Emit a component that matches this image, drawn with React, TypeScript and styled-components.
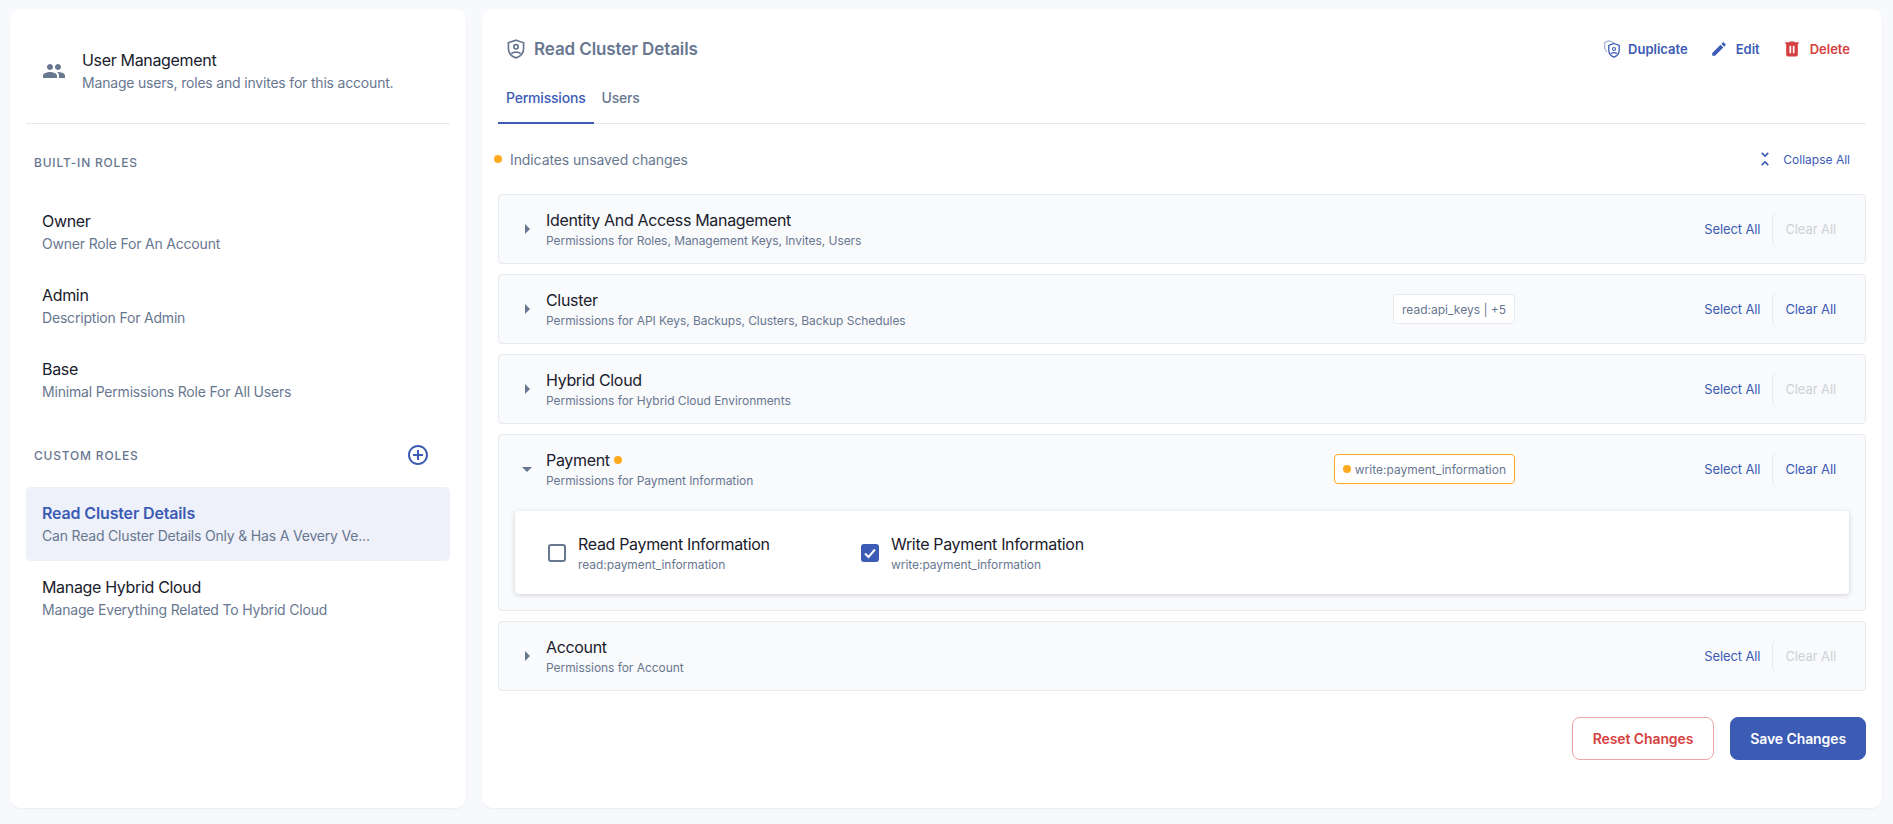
import React from 'react';
import styled, { createGlobalStyle } from 'styled-components';
import { MdAddCircleOutline, MdArrowDropDown, MdArrowRight, MdEdit, MdPeople, MdUnfoldLess } from 'react-icons/md';

const PRIMARY = '#3b5bb5';
const DARK = '#1a202c';
const MUTED = '#687790';
const LINE = '#e6e9ef';
const ORANGE = '#ffa91f';
const RED = '#d53f3f';

const GlobalStyles = createGlobalStyle`
  html, body {
    margin: 0;
    padding: 0;
    background: #f8f9fc;
    font-family: Inter, "Liberation Sans", sans-serif;
    color: ${DARK};
  }
  * { box-sizing: border-box; }
`;

const Page = styled.div`
  display: grid;
  grid-template-columns: 456px 1400px;
  gap: 16px;
  height: 824px;
  padding: 9px 11px 16px 10px;
`;

const Card = styled.div`
  background: #fff;
  border-radius: 10px;
  box-shadow: 0 1px 2px rgba(30, 41, 59, 0.06);
  padding: 0 16px;
`;

const SideHeader = styled.div`
  display: flex;
  align-items: center;
  gap: 16px;
  height: 115px;
  padding: 9px 0 0 16px;
  border-bottom: 1px solid ${LINE};
  color: ${MUTED};
`;

const TextStack = styled.div`
  display: flex;
  flex-direction: column;
  min-width: 0;
`;

const Title = styled.div`
  font-size: 16px;
  line-height: 24px;
  letter-spacing: -0.33px;
  color: ${DARK};
`;

const SideSub = styled.div`
  font-size: 14px;
  line-height: 22px;
  letter-spacing: -0.19px;
  color: ${MUTED};
  white-space: nowrap;
  overflow: hidden;
  text-overflow: ellipsis;
`;

const SectionRow = styled.div<{ $top: number; $bottom: number }>`
  display: flex;
  align-items: center;
  justify-content: space-between;
  height: 24px;
  margin: ${p => p.$top}px 0 ${p => p.$bottom}px;
  padding: 0 20px 0 8px;
`;

const SectionLabel = styled.div`
  font-size: 12px;
  font-weight: 500;
  letter-spacing: 0.8px;
  color: ${MUTED};
`;

const AddIcon = styled(MdAddCircleOutline)`
  display: block;
  color: ${PRIMARY};
`;

const RoleItem = styled.div<{ $active?: boolean }>`
  height: 74px;
  padding: 14px 16px;
  border-radius: 5px;
  background: ${p => (p.$active ? '#eef1f9' : 'transparent')};
`;

const RoleName = styled(Title)<{ $active?: boolean }>`
  color: ${p => (p.$active ? PRIMARY : DARK)};
  font-weight: ${p => (p.$active ? 600 : 400)};
  letter-spacing: ${p => (p.$active ? '-0.15px' : '-0.33px')};
`;

const TitleRow = styled.div`
  display: flex;
  align-items: center;
  justify-content: space-between;
  height: 67px;
  padding: 13px 16px 0 9px;
`;

const RoleHeading = styled.div`
  display: flex;
  align-items: center;
  gap: 9px;
  font-size: 17px;
  font-weight: 600;
  letter-spacing: -0.1px;
  color: ${MUTED};
`;

const HeaderActions = styled.div`
  display: flex;
  align-items: center;
  gap: 22px;
`;

const HeaderAction = styled.div<{ $danger?: boolean }>`
  display: flex;
  align-items: center;
  gap: 8px;
  font-size: 13px;
  font-weight: 600;
  color: ${p => (p.$danger ? RED : PRIMARY)};
`;

const Tabs = styled.div`
  display: flex;
  height: 48px;
  border-bottom: 1px solid ${LINE};
`;

const Tab = styled.div<{ $active?: boolean }>`
  height: 48px;
  padding: 0 8px;
  line-height: 44px;
  font-size: 14px;
  font-weight: 500;
  letter-spacing: -0.2px;
  color: ${p => (p.$active ? PRIMARY : MUTED)};
  border-bottom: ${p => (p.$active ? `2px solid ${PRIMARY}` : 'none')};
`;

const Toolbar = styled.div`
  display: flex;
  align-items: center;
  justify-content: space-between;
  height: 70px;
  padding-right: 16px;
`;

const Legend = styled.div`
  display: flex;
  align-items: center;
  gap: 8px;
  margin-left: -4px;
  font-size: 14px;
  letter-spacing: -0.1px;
  color: ${MUTED};
`;

const Dot = styled.span`
  display: inline-block;
  flex: none;
  width: 8px;
  height: 8px;
  border-radius: 50%;
  background: ${ORANGE};
`;

const CollapseAll = styled.div`
  display: flex;
  align-items: center;
  gap: 8px;
  font-size: 12px;
  color: ${PRIMARY};
`;

const PanelList = styled.div`
  display: flex;
  flex-direction: column;
  gap: 10px;
`;

const Panel = styled.div`
  background: #f9fafc;
  border: 1px solid ${LINE};
  border-radius: 4px;
`;

const PanelHeader = styled.div`
  display: flex;
  align-items: center;
  height: 68px;
  padding-left: 16px;
`;

const Caret = styled.span`
  display: flex;
  color: ${MUTED};
  margin-right: 7px;
`;

const PanelText = styled.div`
  flex: 1;
  min-width: 0;
`;

const PanelTitle = styled(Title)`
  display: flex;
  align-items: center;
  gap: 4px;
`;

const PanelSub = styled.div`
  font-size: 12px;
  line-height: 18px;
  letter-spacing: -0.05px;
  color: ${MUTED};
`;

const Tag = styled.div<{ $changed?: boolean }>`
  display: flex;
  align-items: center;
  gap: 4px;
  height: 30px;
  padding: 0 8px;
  font-size: 12px;
  color: ${MUTED};
  background: #fff;
  border: 1px solid ${p => (p.$changed ? ORANGE : LINE)};
  border-radius: 4px;
`;

const PanelActions = styled.div`
  display: flex;
  align-items: center;
  justify-content: flex-end;
  width: 350px;
  padding-right: 29px;
  flex: none;
  font-size: 13px;
  letter-spacing: -0.1px;
`;

const SelectAll = styled.div`
  color: ${PRIMARY};
  margin-right: 12px;
`;

const ClearAll = styled.div<{ $disabled: boolean }>`
  display: flex;
  align-items: center;
  height: 37px;
  padding-left: 12px;
  border-left: 1px solid ${LINE};
  border-radius: 8px;
  color: ${p => (p.$disabled ? '#cdd1d8' : PRIMARY)};
`;

const PermissionCard = styled.div`
  display: flex;
  align-items: center;
  height: 83px;
  margin: 8px 16px 16px;
  padding-left: 33px;
  background: #fff;
  border-radius: 4px;
  box-shadow: 0 1px 5px rgba(30, 41, 59, 0.2);
`;

const Permission = styled.div`
  display: flex;
  align-items: center;
  gap: 12px;
  width: 313px;
`;

const CheckBox = styled.div<{ $checked: boolean }>`
  display: flex;
  align-items: center;
  justify-content: center;
  flex: none;
  width: 18px;
  height: 18px;
  border-radius: 3px;
  background: ${p => (p.$checked ? PRIMARY : '#fff')};
  border: ${p => (p.$checked ? 'none' : `2px solid ${MUTED}`)};
`;

const Footer = styled.div`
  display: flex;
  justify-content: flex-end;
  gap: 16px;
  margin-top: 26px;
`;

const FooterButton = styled.button<{ $primary?: boolean }>`
  height: 43px;
  padding: 0 ${p => (p.$primary ? 19 : 20)}px;
  border-radius: 8px;
  font-family: inherit;
  font-size: 14px;
  font-weight: 600;
  letter-spacing: -0.1px;
  color: ${p => (p.$primary ? '#fff' : RED)};
  background: ${p => (p.$primary ? PRIMARY : '#fff')};
  border: 1px solid ${p => (p.$primary ? PRIMARY : '#eba3a6')};
`;

function ShieldIcon() {
  return (
    <svg width="18" height="20" viewBox="0 0 18 20" fill="none" stroke={MUTED} strokeWidth="1.7">
      <path d="M9 1.2 16.6 3.8V9.5C16.6 14 13.4 17.4 9 18.9 4.6 17.4 1.4 14 1.4 9.5V3.8Z" />
      <circle cx="9" cy="7.8" r="2.2" />
      <path d="M4.4 14.6C6 12.6 12 12.6 13.6 14.6" />
    </svg>
  );
}

function DuplicateIcon() {
  return (
    <svg width="16" height="18" viewBox="0 0 16 18" fill="none" stroke={PRIMARY} strokeWidth="1.1">
      <path opacity="0.5" d="M5 .8 9.6 2.4M5 .8.7 2.4V7C.7 9 1.6 10.800 3 12" />
      <path d="M10 3.500 15.200 5.400V10C15.200 13.400 13 15.900 10 17.200 7 15.900 4.800 13.400 4.800 10V5.400Z" strokeWidth="1.3" />
      <circle cx="10" cy="9" r="1.500" />
      <path d="M7 13.600C8 12.300 12 12.300 13 13.600" />
    </svg>
  );
}

function TrashIcon() {
  return (
    <svg width="20" height="20" viewBox="0 0 24 24" fill={RED}>
      <path d="M9 3V4H4V6H5V19A2 2 0 0 0 7 21H17A2 2 0 0 0 19 19V6H20V4H15V3H9M9 8H11V17H9V8M13 8H15V17H13V8Z" />
    </svg>
  );
}

function CheckMark() {
  return (
    <svg width="14" height="14" viewBox="0 0 14 14" fill="none" stroke="#fff" strokeWidth="2">
      <path d="M2 7.500 5.500 11 12 3.500" />
    </svg>
  );
}

interface RoleProps {
  name: string;
  description: string;
  active?: boolean;
}

function Role({ name, description, active }: RoleProps) {
  return (
    <RoleItem $active={active}>
      <RoleName $active={active}>{name}</RoleName>
      <SideSub>{description}</SideSub>
    </RoleItem>
  );
}

interface PermissionGroupProps {
  title: string;
  description: string;
  tag?: string;
  changed?: boolean;
  canClear?: boolean;
  children?: React.ReactNode;
}

function PermissionGroup({ title, description, tag, changed, canClear, children }: PermissionGroupProps) {
  return (
    <Panel>
      <PanelHeader>
        <Caret>{children ? <MdArrowDropDown size={24} /> : <MdArrowRight size={24} />}</Caret>
        <PanelText>
          <PanelTitle>
            {title}
            {changed && <Dot />}
          </PanelTitle>
          <PanelSub>{description}</PanelSub>
        </PanelText>
        {tag && (
          <Tag $changed={changed}>
            {changed && <Dot />}
            {tag}
          </Tag>
        )}
        <PanelActions>
          <SelectAll>Select All</SelectAll>
          <ClearAll $disabled={!canClear}>Clear All</ClearAll>
        </PanelActions>
      </PanelHeader>
      {children}
    </Panel>
  );
}

export default function App() {
  return (
    <>
      <GlobalStyles />
      <Page>
        <Card>
          <SideHeader>
            <MdPeople size={24} />
            <TextStack>
              <Title>User Management</Title>
              <SideSub>Manage users, roles and invites for this account.</SideSub>
            </TextStack>
          </SideHeader>

          <SectionRow $top={26} $bottom={21}>
            <SectionLabel>BUILT-IN ROLES</SectionLabel>
          </SectionRow>
          <Role name="Owner" description="Owner Role For An Account" />
          <Role name="Admin" description="Description For Admin" />
          <Role name="Base" description="Minimal Permissions Role For All Users" />

          <SectionRow $top={26} $bottom={20}>
            <SectionLabel>CUSTOM ROLES</SectionLabel>
            <AddIcon size={24} />
          </SectionRow>
          <Role name="Read Cluster Details" description="Can Read Cluster Details Only & Has A Vevery Ve..." active />
          <Role name="Manage Hybrid Cloud" description="Manage Everything Related To Hybrid Cloud" />
        </Card>

        <Card>
          <TitleRow>
            <RoleHeading>
              <ShieldIcon />
              Read Cluster Details
            </RoleHeading>
            <HeaderActions>
              <HeaderAction>
                <DuplicateIcon />
                Duplicate
              </HeaderAction>
              <HeaderAction>
                <MdEdit size={18} />
                Edit
              </HeaderAction>
              <HeaderAction $danger>
                <TrashIcon />
                Delete
              </HeaderAction>
            </HeaderActions>
          </TitleRow>

          <Tabs>
            <Tab $active>Permissions</Tab>
            <Tab>Users</Tab>
          </Tabs>

          <Toolbar>
            <Legend>
              <Dot />
              Indicates unsaved changes
            </Legend>
            <CollapseAll>
              <MdUnfoldLess size={20} />
              Collapse All
            </CollapseAll>
          </Toolbar>

          <PanelList>
            <PermissionGroup title="Identity And Access Management" description="Permissions for Roles, Management Keys, Invites, Users" />
            <PermissionGroup title="Cluster" description="Permissions for API Keys, Backups, Clusters, Backup Schedules" tag="read:api_keys | +5" canClear />
            <PermissionGroup title="Hybrid Cloud" description="Permissions for Hybrid Cloud Environments" />
            <PermissionGroup title="Payment" description="Permissions for Payment Information" tag="write:payment_information" changed canClear>
              <PermissionCard>
                <Permission>
                  <CheckBox $checked={false} />
                  <TextStack>
                    <Title>Read Payment Information</Title>
                    <PanelSub>read:payment_information</PanelSub>
                  </TextStack>
                </Permission>
                <Permission>
                  <CheckBox $checked>
                    <CheckMark />
                  </CheckBox>
                  <TextStack>
                    <Title>Write Payment Information</Title>
                    <PanelSub>write:payment_information</PanelSub>
                  </TextStack>
                </Permission>
              </PermissionCard>
            </PermissionGroup>
            <PermissionGroup title="Account" description="Permissions for Account" />
          </PanelList>

          <Footer>
            <FooterButton>Reset Changes</FooterButton>
            <FooterButton $primary>Save Changes</FooterButton>
          </Footer>
        </Card>
      </Page>
    </>
  );
}
